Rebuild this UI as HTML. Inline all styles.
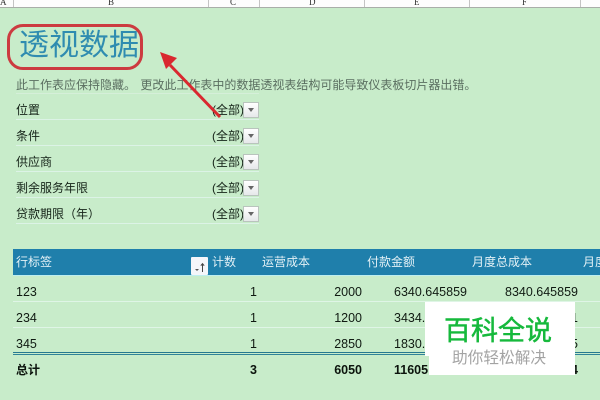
<!DOCTYPE html>
<html><head><meta charset="utf-8"><style>
html,body{margin:0;padding:0}
body{width:600px;height:400px;overflow:hidden;position:relative;background:#c8ecca;font-family:"Liberation Sans","Noto Sans CJK SC",sans-serif;font-size:12px;color:#152318}
div{position:absolute;white-space:nowrap}
.t{line-height:16px;height:16px}
.n{font-size:12.5px;color:#101a12}
.sep{left:16px;width:243px;height:1px;background:#dcf3e6}
.rs{left:13px;width:587px;height:1px;background:#dff5e6}
.btn{left:243px;width:14px;height:14px;background:linear-gradient(#fff,#e6e8ea);border:1px solid #b9c4bd;box-sizing:content-box}
.btn:after{content:"";position:absolute;left:4px;top:5px;border-left:3.5px solid transparent;border-right:3.5px solid transparent;border-top:4px solid #666}
.h{color:#e4f1f6}
.r{text-align:right;width:100px}
.b{font-weight:bold;color:#0c140d}
.cs{top:0;width:1px;height:7px;background:#c4c4c4}
.cl{top:-3px;font:9px/10px "Liberation Serif",serif;color:#333}
</style></head><body>
<div style="left:0;top:0;width:600px;height:7px;background:#fdfdfd"></div>
<div style="left:0;top:7px;width:600px;height:1px;background:#a9aea9"></div>
<div class="cs" style="left:13px"></div><div class="cs" style="left:208px"></div><div class="cs" style="left:259px"></div><div class="cs" style="left:364px"></div><div class="cs" style="left:469px"></div><div class="cs" style="left:580px"></div>
<div class="cl" style="left:0">A</div><div class="cl" style="left:108px">B</div><div class="cl" style="left:230px">C</div><div class="cl" style="left:309px">D</div><div class="cl" style="left:414px">E</div><div class="cl" style="left:522px">F</div>

<div style="left:19px;top:27px;font-size:30px;line-height:38px;color:#2f8cb0">透视数据</div>
<div style="left:7px;top:24px;width:130px;height:40px;border:3px solid #cc3b40;border-radius:16px"></div>

<div class="t" style="left:16px;top:77px;color:#5a6e60;font-size:12px;word-spacing:1px">此工作表应保持隐藏。 更改此工作表中的数据透视表结构可能导致仪表板切片器出错。</div>
<div class="sep" style="top:93px;background:#d5efd9"></div>

<div class="t" style="left:16px;top:102px">位置</div><div class="t" style="left:212px;top:102px">(全部)</div><div class="btn" style="top:102px"></div><div class="sep" style="top:119px"></div>
<div class="t" style="left:16px;top:128px">条件</div><div class="t" style="left:212px;top:128px">(全部)</div><div class="btn" style="top:128px"></div><div class="sep" style="top:145px"></div>
<div class="t" style="left:16px;top:154px">供应商</div><div class="t" style="left:212px;top:154px">(全部)</div><div class="btn" style="top:154px"></div><div class="sep" style="top:171px"></div>
<div class="t" style="left:16px;top:180px">剩余服务年限</div><div class="t" style="left:212px;top:180px">(全部)</div><div class="btn" style="top:180px"></div><div class="sep" style="top:197px"></div>
<div class="t" style="left:16px;top:206px">贷款期限（年）</div><div class="t" style="left:212px;top:206px">(全部)</div><div class="btn" style="top:206px"></div><div class="sep" style="top:223px"></div>

<svg style="position:absolute;left:0;top:0" width="600" height="400"><line x1="220" y1="117" x2="170" y2="65" stroke="#d9282f" stroke-width="3"/><polygon points="160,52 177,58 166,69" fill="#d9282f"/></svg>

<div style="left:13px;top:249px;width:587px;height:26px;background:#1f7fab"></div>
<div style="left:13px;top:275px;width:587px;height:1px;background:#bdeef0"></div>
<div class="t h" style="left:16px;top:254px">行标签</div>
<div class="t h" style="left:212px;top:254px">计数</div>
<div class="t h" style="left:262px;top:254px">运营成本</div>
<div class="t h" style="left:367px;top:254px">付款金额</div>
<div class="t h" style="left:472px;top:254px">月度总成本</div>
<div class="t h" style="left:583px;top:254px">月度</div>
<div style="left:191px;top:257px;width:17px;height:18px;background:#f4f6fa;border-radius:1px"></div>
<svg style="position:absolute;left:191px;top:257px" width="17" height="18"><path d="M4 12l2 2 2-2z" fill="#555"/><path d="M11.500 15V7M9.800 8.700l1.700-2 1.700 2" fill="none" stroke="#444" stroke-width="1"/></svg>

<div class="t n" style="left:16px;top:284px">123</div><div class="t n" style="left:250px;top:284px">1</div><div class="t r n" style="left:262px;top:284px">2000</div><div class="t r n" style="left:367px;top:284px">6340.645859</div><div class="t r n" style="left:478px;top:284px">8340.645859</div>
<div class="rs" style="top:301px"></div>
<div class="t n" style="left:16px;top:310px">234</div><div class="t n" style="left:250px;top:310px">1</div><div class="t r n" style="left:262px;top:310px">1200</div><div class="t n" style="left:394px;top:310px">3434.</div><div class="t n" style="left:571px;top:310px">1</div>
<div class="rs" style="top:327px"></div>
<div class="t n" style="left:16px;top:336px">345</div><div class="t n" style="left:250px;top:336px">1</div><div class="t r n" style="left:262px;top:336px">2850</div><div class="t n" style="left:394px;top:336px">1830.</div><div class="t n" style="left:571px;top:336px">5</div>
<div style="left:13px;top:352px;width:587px;height:1px;background:#26788f"></div>
<div style="left:13px;top:354px;width:587px;height:1px;background:#2f8399"></div>
<div class="t b" style="left:16px;top:362px">总计</div><div class="t b n" style="left:250px;top:362px;color:#0c140d">3</div><div class="t r b n" style="left:262px;top:362px;color:#0c140d">6050</div><div class="t b n" style="left:394px;top:362px;color:#0c140d">11605</div><div class="t b n" style="left:571px;top:362px;color:#0c140d">4</div>

<div style="left:425px;top:302px;width:150px;height:54px;background:#fff"></div>
<div style="left:429px;top:356px;width:146px;height:19px;background:#fff"></div>
<div style="left:444px;top:315px;font-size:27px;line-height:32px;color:#16b93c;-webkit-text-stroke:.5px #16b93c">百科全说</div>
<div style="left:452px;top:349px;font-size:15.700px;line-height:20px;color:#a3a3a3">助你轻松解决</div>
</body></html>
